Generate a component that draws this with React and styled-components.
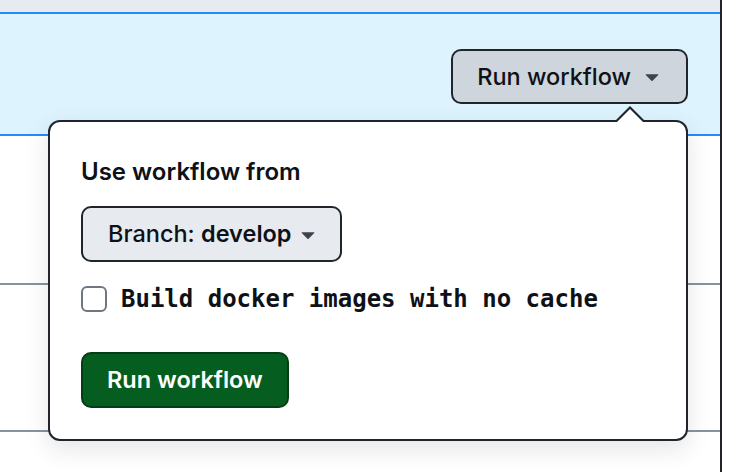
import React from 'react';
import styled, { createGlobalStyle } from 'styled-components';

const GlobalStyle = createGlobalStyle`
    html, body {
        margin : 0;
        padding : 0;
        background : #ffffff;
    }
    body {
        font-family : Inter, "Noto Sans", "Liberation Sans", sans-serif;
        color : #0e1116;
    }
    * {
        box-sizing : border-box;
    }
`;

const Page = styled.div`
    display : flex;
    width : 742px;
    height : 472px;
    overflow : hidden;
`;

const Panel = styled.div`
    width : 722px;
    height : 100%;
    border-right : 2px solid #20252c;
    display : flex;
    flex-direction : column;
`;

const TopStrip = styled.div`
    height : 12px;
    background : #e7ebef;
`;

const ActiveRow = styled.div`
    height : 125px;
    background : #ddf4ff;
    border-top : 2px solid #218bff;
    border-bottom : 2px solid #218bff;
    display : flex;
    justify-content : flex-end;
    align-items : flex-start;
    padding : 35px 32px 0 0;
    position : relative;
    z-index : 2;
`;

const Row = styled.div`
    height : ${props => props.h}px;
    border-bottom : ${props => props.last ? 'none' : '2px solid #88929d'};
    background : #ffffff;
`;

const Anchor = styled.div`
    position : relative;
`;

const Button = styled.button`
    display : flex;
    align-items : center;
    height : ${props => props.h || 55}px;
    border-radius : 10px;
    border : 2px solid ${props => props.primary ? '#033f14' : '#20252c'};
    background : ${props => props.bg};
    color : ${props => props.primary ? '#ffffff' : '#0e1116'};
    font-family : Inter, "Noto Sans", "Liberation Sans", sans-serif;
    font-size : 23.5px;
    font-weight : ${props => props.primary ? 600 : 500};
    padding : ${props => props.pad};
    cursor : pointer;
    white-space : nowrap;
    b {
        font-weight : 600;
    }
    svg {
        flex : none;
    }
`;

const Popover = styled.div`
    position : absolute;
    top : calc(100% + 16px);
    right : 0;
    width : 640px;
    background : #ffffff;
    border : 2px solid #20252c;
    border-radius : 12px;
    padding : 32px 31px 31px;
    box-shadow : 0 8px 24px rgba(37, 41, 46, 0.12);
    display : flex;
    flex-direction : column;
    align-items : flex-start;
    &::before, &::after {
        content : '';
        position : absolute;
        width : 0;
        height : 0;
        border-left : 14px solid transparent;
        border-right : 14px solid transparent;
    }
    &::before {
        top : -16px;
        right : 42px;
        border-bottom : 14px solid #20252c;
    }
    &::after {
        top : -13px;
        right : 42px;
        border-bottom : 14px solid #ffffff;
    }
`;

const Title = styled.div`
    font-size : 24px;
    font-weight : 600;
    line-height : 36px;
    margin-bottom : 16px;
`;

const CheckRow = styled.label`
    display : flex;
    align-items : center;
    gap : 14px;
    height : 36px;
    margin : 19px 0 35px;
    font-family : "DejaVu Sans Mono", "Liberation Mono", monospace;
    font-weight : bold;
    font-size : 24px;
`;

const Box = styled.span`
    width : 26px;
    height : 26px;
    border : 2px solid #6e7781;
    border-radius : 6px;
    background : #ffffff;
    flex : none;
`;

const Caret = ({ style }) => (
    <svg width="28" height="28" viewBox="0 0 16 16" fill="currentColor" style={style}>
        <path d="m4.427 7.427 3.396 3.396a.25.25 0 0 0 .354 0l3.396-3.396A.25.25 0 0 0 11.396 7H4.604a.25.25 0 0 0-.177.427Z" />
    </svg>
);

function App() {
    return (
        <>
            <GlobalStyle />
            <Page>
                <Panel>
                    <TopStrip />
                    <ActiveRow>
                        <Anchor>
                            <Button bg="#ced5dc" pad="0 20px 0 24px">
                                Run workflow
                                <Caret style={{ marginLeft: 7, color: '#3d444d' }} />
                            </Button>
                            <Popover>
                                <Title>Use workflow from</Title>
                                <Button h={56} bg="#e7ebef" pad="0 18px 0 25px">
                                    Branch:&nbsp;<b>develop</b>
                                    <Caret style={{ marginLeft: 2, color: '#3d444d' }} />
                                </Button>
                                <CheckRow>
                                    <Box />
                                    Build docker images with no cache
                                </CheckRow>
                                <Button h={56} primary bg="#055d20" pad="0 24px">
                                    Run workflow
                                </Button>
                            </Popover>
                        </Anchor>
                    </ActiveRow>
                    <Row h={150} />
                    <Row h={149} />
                    <Row last h={40} />
                </Panel>
            </Page>
        </>
    );
}

export default App;
